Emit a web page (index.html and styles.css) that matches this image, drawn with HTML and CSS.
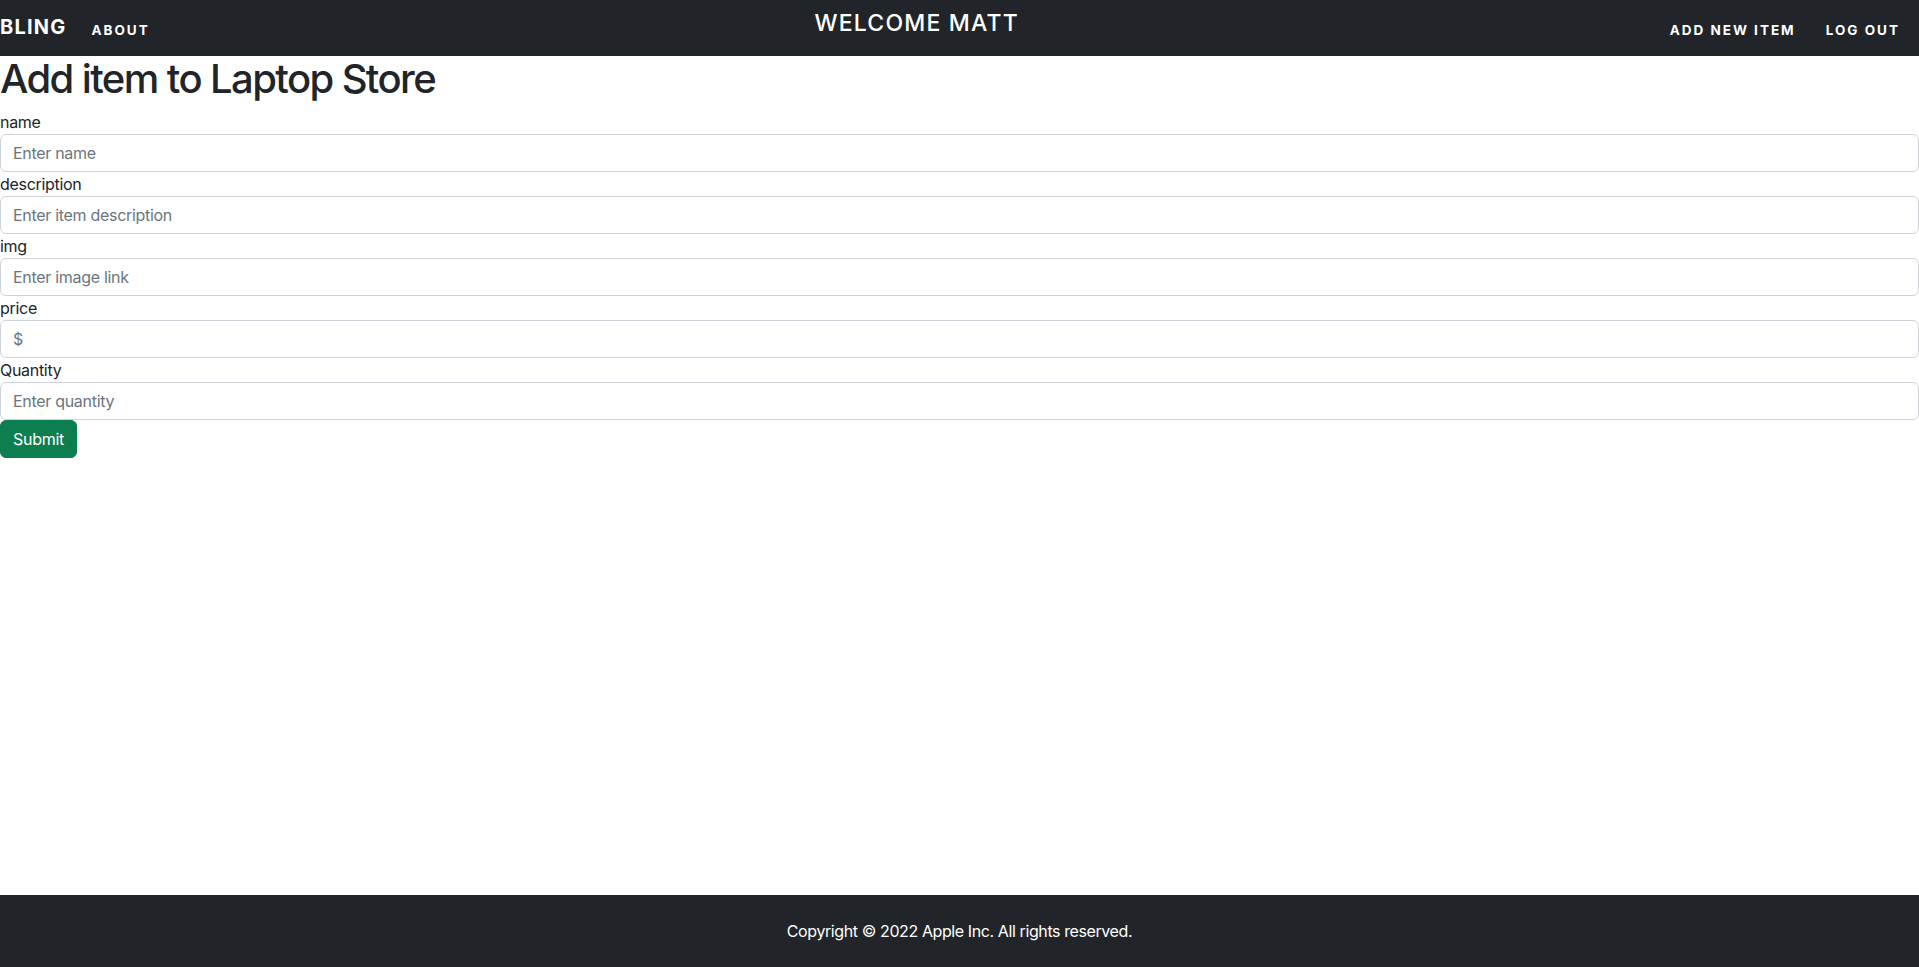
FILE: index.html
```html
<!DOCTYPE html>
<html lang="en">
<head>
<meta charset="utf-8">
<title>Add item</title>
<link rel="stylesheet" href="styles.css">
</head>
<body>
<nav class="navbar">
  <div class="nav-left">
    <a class="brand" href="#">BLING</a>
    <a class="nav-link" href="#">ABOUT</a>
  </div>
  <div class="nav-center">WELCOME MATT</div>
  <div class="nav-right">
    <a class="nav-link" href="#">ADD NEW ITEM</a>
    <a class="nav-link" href="#">LOG OUT</a>
  </div>
</nav>
<main class="main">
  <h1 class="title">Add item to Laptop Store</h1>
  <form class="form">
    <label class="label">name</label>
    <input class="control" type="text" placeholder="Enter name">
    <label class="label">description</label>
    <input class="control" type="text" placeholder="Enter item description">
    <label class="label">img</label>
    <input class="control" type="text" placeholder="Enter image link">
    <label class="label">price</label>
    <input class="control" type="text" placeholder="$">
    <label class="label">Quantity</label>
    <input class="control" type="text" placeholder="Enter quantity">
    <div><button class="btn-submit" type="button">Submit</button></div>
  </form>
</main>
<footer class="footer">Copyright © 2022 Apple Inc. All rights reserved.</footer>
</body>
</html>
```
FILE: styles.css
```css
* { box-sizing: border-box; }
html, body { margin: 0; padding: 0; }
body {
  font-family: Inter, "Liberation Sans", sans-serif;
  font-size: 16px;
  line-height: 1.5;
  letter-spacing: -0.3px;
  color: #212529;
  background: #fff;
  min-height: 100vh;
  display: flex;
  flex-direction: column;
}
a { text-decoration: none; color: inherit; }

.navbar {
  height: 56px;
  background: #212529;
  color: #fff;
  display: flex;
  justify-content: space-between;
  align-items: flex-start;
  padding-right: 19px;
}
.nav-left, .nav-right { display: flex; align-items: flex-start; }
.nav-left { gap: 25px; padding-right: 14px; }
.nav-right { gap: 30px; }
.brand {
  font-size: 20px;
  font-weight: 700;
  letter-spacing: 1.2px;
  line-height: 24px;
  padding-top: 15px;
}
.nav-link {
  font-size: 13.5px;
  font-weight: 700;
  letter-spacing: 2px;
  line-height: 20px;
  padding-top: 20px;
}
.nav-center {
  font-size: 23px;
  font-weight: 500;
  letter-spacing: 1.2px;
  line-height: 28px;
  padding-top: 9px;
}

.main { flex: 1; }
.title {
  margin: 0 0 8px;
  font-size: 40px;
  font-weight: 500;
  line-height: 46px;
  letter-spacing: -1.6px;
}
.form { display: flex; flex-direction: column; }
.label { display: block; line-height: 24px; }
.control {
  display: block;
  width: 100%;
  height: 38px;
  padding: 6px 12px;
  font-family: inherit;
  font-size: 16px;
  letter-spacing: -0.3px;
  color: #212529;
  background: #fff;
  border: 1px solid #ced4da;
  border-radius: 6px;
  outline: none;
}
.control::placeholder { color: #6c757d; }
.btn-submit {
  height: 38px;
  width: 77px;
  padding: 6px 0;
  font-family: inherit;
  font-size: 16px;
  letter-spacing: -0.3px;
  color: #fff;
  background: #0d7e50;
  border: 1px solid #0d7e50;
  border-radius: 6px;
}

.footer {
  background: #212529;
  color: #fff;
  text-align: center;
  height: 72px;
  line-height: 24px;
  padding: 24px 0;
  font-size: 16px;
  letter-spacing: -0.4px;
}
```
